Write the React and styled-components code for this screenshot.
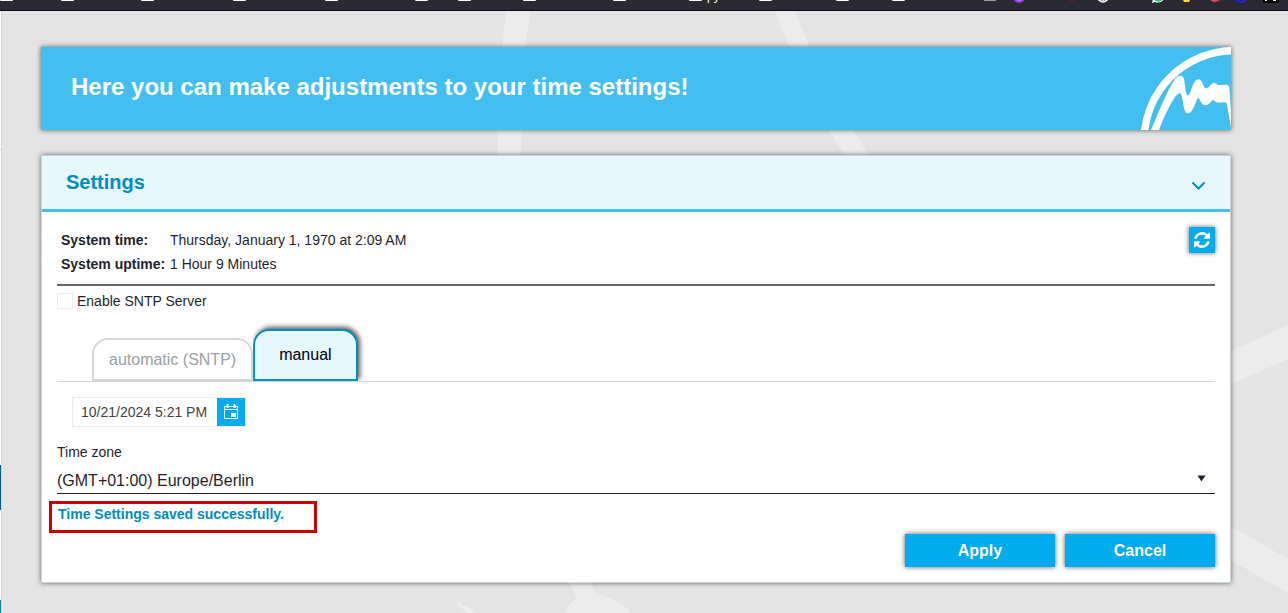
import React, { useState } from 'react';
import styled, { createGlobalStyle } from 'styled-components';

const GlobalStyle = createGlobalStyle`
    * {
        box-sizing: border-box;
    }
    body {
        margin: 0;
        background-color: #e4e4e4;
        color: #1f1f2e;
        font-family: "Liberation Sans", Arial, sans-serif;
        font-size: 14px;
    }
    button, input, select {
        font-family: inherit;
    }
`;

const Page = styled.div`
    min-height: 100vh;
    display: flex;
    flex-direction: column;
`;

const BookmarkBar = styled.div`
    height: 11px;
    display: flex;
    align-items: flex-start;
    overflow: hidden;
    background-color: #2b2a33;
    border-bottom: 1px solid #0c0c0d;
`;

const Bookmark = styled.div`
    flex: none;
    width: ${props => props.$width}px;
    height: 10px;
    display: flex;
    gap: 5px;
    overflow: hidden;
`;

const Folder = styled.span`
    width: 13px;
    height: 1px;
    background-color: #fbfbfe;
    border-radius: 0 0 2px 2px;
`;

const BookmarkName = styled.span`
    margin-top: -11px;
    color: #fbfbfe;
    font-size: 12px;
    line-height: 14px;
`;

const PinnedIcons = styled.svg`
    flex: none;
    margin-left: auto;
`;

const Body = styled.div`
    flex: 1;
    display: flex;
`;

const Sidebar = styled.div`
    width: 2px;
    display: flex;
    flex-direction: column;
    background-color: #ffffff;
    border-right: 1px solid #d5d8da;
`;

const SidebarTop = styled.div`
    height: 139px;
    border-bottom: 1px solid #d5d8da;
`;

const SidebarItem = styled.div`
    height: ${props => props.$height}px;
    background-color: ${props => props.$color};
`;

const Main = styled.main`
    flex: 1;
    position: relative;
    overflow: hidden;
    padding: 36px 57px 30px 39px;
`;

const Backdrop = styled.svg`
    position: absolute;
    top: 0;
    right: 0;
    width: 1286px;
    height: 602px;
`;

const Content = styled.div`
    position: relative;
    display: flex;
    flex-direction: column;
    gap: 25px;
`;

const Banner = styled.header`
    height: 83px;
    display: flex;
    justify-content: space-between;
    align-items: stretch;
    padding-left: 30px;
    background-color: #42bff0;
    box-shadow: 0 0 5px rgba(0, 0, 0, 0.6);
`;

const BannerTitle = styled.h1`
    margin: 0;
    color: #ffffff;
    font-size: 24px;
    line-height: 80px;
`;

const Card = styled.section`
    background-color: #ffffff;
    border: 1px solid #cfd4d7;
    box-shadow: 0 0 5px rgba(0, 20, 30, 0.6);
`;

const CardHeader = styled.div`
    height: 56px;
    display: flex;
    align-items: center;
    justify-content: space-between;
    padding: 0 24px;
    background-color: #e6f7fe;
    border-bottom: 3px solid #42bff0;
`;

const CardTitle = styled.h2`
    margin: 0;
    padding-bottom: 2px;
    color: #008ebc;
    font-size: 20px;
    line-height: 24px;
`;

const ToggleButton = styled.button`
    display: flex;
    padding: 6px 0 0;
    border: none;
    background: none;
    color: #008ebc;
`;

const CardBody = styled.div`
    padding: 15px;
`;

const InfoRow = styled.div`
    display: flex;
    justify-content: space-between;
    align-items: flex-start;
    padding-bottom: 8px;
    border-bottom: 2px solid #666666;
`;

const InfoList = styled.dl`
    display: grid;
    grid-template-columns: 109px auto;
    margin: 0;
    padding: 1px 0 0 4px;
    line-height: 24px;
`;

const InfoLabel = styled.dt`
    font-weight: bold;
    white-space: nowrap;
`;

const InfoValue = styled.dd`
    margin: 0;
`;

const RefreshButton = styled.button`
    width: 26px;
    height: 26px;
    display: flex;
    align-items: center;
    justify-content: center;
    padding: 0;
    border: none;
    background-color: #00abee;
    color: #ffffff;
    box-shadow: 0 0 5px rgba(0, 0, 0, 0.6);
`;

const CheckRow = styled.label`
    display: flex;
    align-items: center;
    gap: 4px;
    margin-top: 7px;
    line-height: 16px;
`;

const Checkbox = styled.input`
    appearance: none;
    width: 16px;
    height: 16px;
    margin: 0;
    border: 1px solid #ebebeb;
    border-radius: 1px;
    background-color: #ffffff;
    &:checked {
        background-color: #00abee;
    }
`;

const TabList = styled.div`
    display: flex;
    align-items: flex-end;
    margin-top: 20px;
    padding-left: 35px;
    border-bottom: 1px solid #d5d8da;
`;

const Tab = styled.button`
    height: ${props => (props.$active ? 52 : 43)}px;
    padding: 0 ${props => (props.$active ? 24 : 15)}px;
    border: 2px solid ${props => (props.$active ? '#008ebc' : '#d5d8da')};
    border-radius: 16px 16px 0 0;
    background-color: ${props => (props.$active ? '#e6f7fe' : '#ffffff')};
    box-shadow: ${props => (props.$active ? '2px -2px 5px rgba(0, 0, 0, 0.65)' : 'none')};
    color: ${props => (props.$active ? '#000000' : '#9aa0a4')};
    font-size: 16px;
    clip-path: inset(-10px -10px 0 0);
`;

const DateField = styled.div`
    width: 174px;
    height: 30px;
    display: flex;
    margin: 15px 0 0 15px;
    border: 1px solid #ebebeb;
`;

const DateInput = styled.input`
    flex: 1;
    min-width: 0;
    padding: 0 8px;
    border: none;
    color: #424242;
    font-size: 14px;
`;

const DateButton = styled.button`
    width: 28px;
    display: flex;
    align-items: center;
    justify-content: center;
    padding: 0;
    border: none;
    background-color: #00abee;
`;

const FieldLabel = styled.label`
    display: block;
    margin-top: 17px;
    line-height: 16px;
`;

const SelectBox = styled.div`
    position: relative;
    margin-top: 8px;
    border-bottom: 1px solid #1f1f2e;
`;

const Select = styled.select`
    appearance: none;
    display: block;
    width: 100%;
    height: 25px;
    padding: 0;
    border: none;
    background: none;
    color: #1f1f2e;
    font-size: 16px;
`;

const SelectArrow = styled.svg`
    position: absolute;
    right: 9px;
    top: 7px;
    pointer-events: none;
`;

const Message = styled.p`
    width: 268px;
    height: 32px;
    margin: 7px 0 0 -8px;
    padding: 2px 6px;
    border: 3px solid #cc0000;
    color: #008ebc;
    font-size: 14px;
    font-weight: bold;
    line-height: 16px;
`;

const Actions = styled.div`
    display: flex;
    justify-content: flex-end;
    gap: 10px;
    margin-top: 1px;
`;

const ActionButton = styled.button`
    width: 150px;
    height: 33px;
    padding: 0;
    border: none;
    background-color: #00abee;
    color: #ffffff;
    font-size: 16px;
    font-weight: bold;
    box-shadow: 0 0 5px rgba(0, 0, 0, 0.65);
`;

// width is the distance to the next bookmark
const bookmarks = [
    { width: 61 },
    { width: 80 },
    { width: 92 },
    { width: 92 },
    { width: 90 },
    { width: 43 },
    { width: 65 },
    { width: 90 },
    { width: 76 },
    { width: 70, name: 'py' },
    { width: 77 },
    { width: 56 },
    { width: 30 },
];

const BookmarkIcons = () => (
    <PinnedIcons width="310" height="4" viewBox="0 0 310 4">
        <rect x="6" width="12" height="1" fill="#8d9c98" />
        <circle cx="41" cy="-3" r="6" fill="#a033ee" />
        <path d="M39 0h4" stroke="#dcb5fa" />
        <path d="M92 0h4" stroke="#7c1730" strokeWidth="2" />
        <circle cx="125" cy="-3" r="5" fill="none" stroke="#f4f4f4" strokeWidth="1.5" />
        <path d="M120 0h10M125 0v2" stroke="#f4f4f4" />
        <path d="M174 3l1-4h11q-3 5-9 3z" fill="#ffffff" />
        <path d="M176 0h8q-3 3-6 1z" fill="#22c55e" />
        <path d="M205 0h7l-1 2h-5z" fill="#ffe033" />
        <circle cx="237" cy="-4" r="6" fill="#f0405a" />
        <circle cx="263" cy="-3" r="5" fill="none" stroke="#2222ee" strokeWidth="2" />
        <rect x="285" width="16" height="3" fill="#000000" />
        <path d="M287 0h2M295 0h3" stroke="#ffffff" strokeWidth="2" />
    </PinnedIcons>
);

const BackgroundLines = () => (
    <Backdrop viewBox="2 11 1286 602" fill="#ececec" aria-hidden="true">
        <path d="M506 11h24Q520 85 521 155h-23Q497 90 506 11z" />
        <path d="M775 11h20Q826 92 869 155h-25Q804 90 775 11z" />
        <path d="M1220 356L1288 325V359L1220 389z" />
        <path d="M1220 520L1288 559V593L1220 554z" />
        <path d="M569 578h20l7 17Q616 597 632 613H564Q568 605 576 599z" />
        <path d="M456 601L478 613H468L459 607z" />
    </Backdrop>
);

const Logo = () => (
    <svg width="90" height="83" viewBox="63 36 270 249" aria-hidden="true">
        <circle cx="343" cy="318" r="271" fill="none" stroke="#ffffff" strokeWidth="22" />
        <path
            fill="#ffffff"
            d="M93 285C115 235 140 168 165 133Q173 121 183 122Q190 123 192 133C196 152 197 181 204 182C213 181 217 133 236 133C249 134 248 160 259 160C268 160 272 143 283 143Q289 144 293 150L318 149Q327 149 328 158L334 240V285L321 209Q320 202 314 202L293 203Q286 202 280 195C273 197 268 211 256 211C243 211 240 190 235 188C229 188 222 235 203 235C188 235 190 178 180 175C167 173 139 228 117 285z"
        />
    </svg>
);

const CalendarIcon = () => (
    <svg width="16" height="16" viewBox="0 0 16 16" fill="none" aria-hidden="true">
        <path d="M1.5 2.5H14.5V14.5H1.5zM1 5.5H15" stroke="#ffffff" />
        <path d="M4.5 0v4M11.5 0v4" stroke="#ffffff" strokeWidth="2" />
        <path d="M8 9h5v4H8z" fill="#ffffff" />
    </svg>
);

const RefreshIcon = () => (
    <svg width="16" height="16" viewBox="0 0 1536 1536" fill="currentColor" aria-hidden="true">
        <path d="M1511 928q0 5-1 7-64 268-268 434.5t-478 166.5q-146 0-282.5-55t-243.5-157l-129 129q-19 19-45 19t-45-19-19-45v-448q0-26 19-45t45-19h448q26 0 45 19t19 45-19 45l-137 137q71 66 161 102t187 36q134 0 250-65t186-179q11-17 53-117 8-23 30-23h192q13 0 22.500 9.500t9.500 22.500zm25-800v448q0 26-19 45t-45 19h-448q-26 0-45-19t-19-45 19-45l138-138q-148-137-349-137-134 0-250 65t-186 179q-11 17-53 117-8 23-30 23h-199q-13 0-22.500-9.500t-9.500-22.500v-7q65-268 270-434.500t480-166.500q146 0 284 55.500t245 156.500l130-129q19-19 45-19t45 19 19 45z" />
    </svg>
);

const App = () => {
    const [tab, setTab] = useState('manual');
    const [date, setDate] = useState('10/21/2024 5:21 PM');

    return (
        <Page>
            <GlobalStyle />
            <BookmarkBar>
                {bookmarks.map((item, index) => (
                    <Bookmark key={index} $width={item.width}>
                        <Folder />
                        {item.name && <BookmarkName>{item.name}</BookmarkName>}
                    </Bookmark>
                ))}
                <BookmarkIcons />
            </BookmarkBar>
            <Body>
                <Sidebar>
                    <SidebarTop />
                    <SidebarItem $height={315} $color="#ffffff" />
                    <SidebarItem $height={45} $color="#005f87" />
                    <SidebarItem $height={90} $color="#ffffff" />
                    <SidebarItem $height={13} $color="#1180a6" />
                </Sidebar>
                <Main>
                    <BackgroundLines />
                    <Content>
                        <Banner>
                            <BannerTitle>Here you can make adjustments to your time settings!</BannerTitle>
                            <Logo />
                        </Banner>
                        <Card>
                            <CardHeader>
                                <CardTitle>Settings</CardTitle>
                                <ToggleButton aria-label="Collapse settings">
                                    <svg width="15" height="9" viewBox="0 0 15 9">
                                        <path d="M1.5 1.5L7.5 7.5L13.5 1.5" fill="none" stroke="currentColor" strokeWidth="2" />
                                    </svg>
                                </ToggleButton>
                            </CardHeader>
                            <CardBody>
                                <InfoRow>
                                    <InfoList>
                                        <InfoLabel>System time:</InfoLabel>
                                        <InfoValue>Thursday, January 1, 1970 at 2:09 AM</InfoValue>
                                        <InfoLabel>System uptime:</InfoLabel>
                                        <InfoValue>1 Hour 9 Minutes</InfoValue>
                                    </InfoList>
                                    <RefreshButton aria-label="Refresh">
                                        <RefreshIcon />
                                    </RefreshButton>
                                </InfoRow>
                                <CheckRow>
                                    <Checkbox type="checkbox" />
                                    Enable SNTP Server
                                </CheckRow>
                                <TabList role="tablist">
                                    <Tab role="tab" $active={tab === 'automatic'} onClick={() => setTab('automatic')}>
                                        automatic (SNTP)
                                    </Tab>
                                    <Tab role="tab" $active={tab === 'manual'} onClick={() => setTab('manual')}>
                                        manual
                                    </Tab>
                                </TabList>
                                <DateField>
                                    <DateInput aria-label="Date and time" value={date} onChange={e => setDate(e.target.value)} />
                                    <DateButton aria-label="Open calendar">
                                        <CalendarIcon />
                                    </DateButton>
                                </DateField>
                                <FieldLabel htmlFor="timezone">Time zone</FieldLabel>
                                <SelectBox>
                                    <Select id="timezone">
                                        <option>(GMT+01:00) Europe/Berlin</option>
                                    </Select>
                                    <SelectArrow width="9" height="7" viewBox="0 0 9 7">
                                        <path d="M0.5 0.5H8.5L4.5 6.5z" fill="#1f1f2e" />
                                    </SelectArrow>
                                </SelectBox>
                                <Message>Time Settings saved successfully.</Message>
                                <Actions>
                                    <ActionButton>Apply</ActionButton>
                                    <ActionButton>Cancel</ActionButton>
                                </Actions>
                            </CardBody>
                        </Card>
                    </Content>
                </Main>
            </Body>
        </Page>
    );
};

export default App;
